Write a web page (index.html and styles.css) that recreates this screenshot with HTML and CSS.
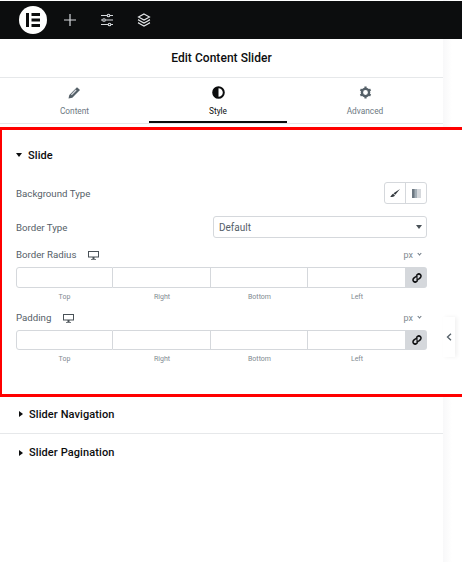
FILE: index.html
```html
<!DOCTYPE html>
<html lang="en">
<head>
    <meta charset="UTF-8">
    <meta name="viewport" content="width=device-width, initial-scale=1.0">
    <title>Edit Content Slider</title>
    <link rel="stylesheet" href="styles.css">
</head>
<body>
  <div class="topbar">
    <div class="logo"><svg width="16" height="14" viewBox="0 0 16 14"><path fill="#0c0d0e" d="M1 0h3v14H1zM6.500 0H15v3H6.500zM6.500 5.500H15v3H6.500zM6.500 11H15v3H6.500z"/></svg></div>
    <svg class="bar-icon" width="14" height="14" viewBox="0 0 14 14"><path stroke="#d5d8dc" stroke-width="1.200" d="M7 1v12M1 7h12"/></svg>
    <svg class="bar-icon" width="14" height="14" viewBox="0 0 14 14" fill="none" stroke="#d5d8dc" stroke-width="1.100"><path d="M1 2.500h6M10 2.500h3M1 7h1.500M5.500 7H13M1 11.500h7M11 11.500h2"/><circle cx="8.500" cy="2.500" r="1.300"/><circle cx="4" cy="7" r="1.300"/><circle cx="9.500" cy="11.500" r="1.300"/></svg>
    <svg class="bar-icon" width="14" height="14" viewBox="0 0 14 14" fill="none" stroke="#e6e8ea" stroke-width="1.100"><path d="M7 1l5.500 3L7 7 1.500 4z"/><path d="M2 6.200L1.500 7 7 10l5.500-3-.5-.8"/><path d="M2 9.200l-.5.800L7 13l5.500-3-.5-.8"/></svg>
  </div>

  <div class="panel">
    <div class="panel-title">Edit Content Slider</div>
    <div class="tabs">
      <div class="tab tab-content">
        <svg width="13" height="13" viewBox="0 0 13 13"><path fill="#556068" d="M.5 12.500l.8-3.600L9 1.200l3 2.900-7.700 7.600z"/><path fill="#d5d8dc" d="M7.600 3.500l1 1-4.800 4.800-.9-.9z"/></svg>
        <span>Content</span>
      </div>
      <div class="tab tab-style tab-active">
        <svg width="13" height="13" viewBox="0 0 13 13"><circle cx="6.500" cy="6.500" r="5.300" fill="none" stroke="#0c0d0e" stroke-width="2"/><path fill="#0c0d0e" d="M6.500 1a5.500 5.500 0 0 0 0 11z"/></svg>
        <span>Style</span>
      </div>
      <div class="tab tab-advanced">
        <svg width="13" height="13" viewBox="0 0 13 13"><circle cx="6.500" cy="6.500" r="3.600" fill="none" stroke="#556068" stroke-width="2.400"/><path stroke="#556068" stroke-width="2.200" d="M6.500 .6v2.200M6.500 10.200v2.200M1.400 3.500l1.900 1.100M9.700 8.400l1.900 1.100M1.400 9.500l1.900-1.100M9.700 4.600l1.900-1.100"/></svg>
        <span>Advanced</span>
      </div>
    </div>
  </div>

  <div class="slide-box">
    <div class="slide-inner">
      <div class="section-head section-open"><i class="caret-down"></i>Slide</div>

      <div class="row row-bg">
        <label>Background Type</label>
        <div class="choices">
          <div class="choice">
            <svg width="10" height="9" viewBox="0 0 10 9"><path fill="#33393e" d="M10 0L5.300 5.800 3.500 4.300zM3 4.800l1.900 1.500C4.500 8 2.300 8.300 0 7.700c1.300-.4 1.600-2.100 3-2.900z"/></svg>
          </div>
          <div class="choice">
            <svg width="9" height="9" viewBox="0 0 9 9"><rect width="9" height="9" fill="#d5d8dc"/><rect width="5" height="9" fill="#a4afb7"/><rect width="2.500" height="9" fill="#6d7882"/></svg>
          </div>
        </div>
      </div>

      <div class="row row-select">
        <label>Border Type</label>
        <div class="select">Default<i class="caret-down caret-select"></i></div>
      </div>

      <div class="dim dim-first">
        <div class="dim-head">
          <label>Border Radius</label>
          <svg class="monitor" width="11" height="10" viewBox="0 0 11 10"><path fill="#495157" d="M0 1h11v6.500H6.500V9H8v.7H3V9h1.500V7.500H0zM1 2v4.500h9V2z"/></svg>
          <span class="unit">px<i class="chev"></i></span>
        </div>
        <div class="dim-inputs">
          <div class="dim-cell"></div><div class="dim-cell"></div><div class="dim-cell"></div><div class="dim-cell"></div>
          <div class="dim-link"><svg width="10" height="10" viewBox="0 0 10 10" fill="none" stroke="#0c0d0e" stroke-width="1.500"><path d="M4.200 2.800l1.200-1.200a1.700 1.700 0 0 1 3 3L7.200 5.800a1.700 1.700 0 0 1-2.700-.3"/><path d="M5.800 7.200L4.600 8.400a1.700 1.700 0 0 1-3-3L2.800 4.200a1.700 1.700 0 0 1 2.700.3"/></svg></div>
        </div>
        <div class="dim-labels"><span>Top</span><span>Right</span><span>Bottom</span><span>Left</span><span></span></div>
      </div>

      <div class="dim dim-second">
        <div class="dim-head">
          <label>Padding</label>
          <svg class="monitor" width="11" height="10" viewBox="0 0 11 10"><path fill="#495157" d="M0 1h11v6.500H6.500V9H8v.7H3V9h1.500V7.500H0zM1 2v4.500h9V2z"/></svg>
          <span class="unit">px<i class="chev"></i></span>
        </div>
        <div class="dim-inputs">
          <div class="dim-cell"></div><div class="dim-cell"></div><div class="dim-cell"></div><div class="dim-cell"></div>
          <div class="dim-link"><svg width="10" height="10" viewBox="0 0 10 10" fill="none" stroke="#0c0d0e" stroke-width="1.500"><path d="M4.200 2.800l1.200-1.200a1.700 1.700 0 0 1 3 3L7.200 5.800a1.700 1.700 0 0 1-2.700-.3"/><path d="M5.800 7.200L4.600 8.400a1.700 1.700 0 0 1-3-3L2.800 4.200a1.700 1.700 0 0 1 2.700.3"/></svg></div>
        </div>
        <div class="dim-labels"><span>Top</span><span>Right</span><span>Bottom</span><span>Left</span><span></span></div>
      </div>
    </div>
  </div>

  <div class="panel">
    <div class="section-head section-closed section-line"><i class="caret-right"></i>Slider Navigation</div>
    <div class="section-head section-closed"><i class="caret-right"></i>Slider Pagination</div>
  </div>

  <div class="collapse">
    <svg width="6" height="8" viewBox="0 0 6 8" fill="none" stroke="#556068" stroke-width="1.300"><path d="M5 .8L1.500 4 5 7.200"/></svg>
  </div>
</body>
</html>
```

FILE: styles.css
```css
* {
  box-sizing: border-box;
}
body {
  margin: 0;
  height: 562px;
  overflow: hidden;
  position: relative;
  font-family: Roboto, sans-serif;
  background: linear-gradient(to right, #fff 443px, #f8f8f9 443px, #fff 452px);
  color: #6d7882;
}
label {
  font-size: 9.700px;
  color: #556068;
}

.topbar {
  margin-top: 1px;
  height: 38px;
  background: #0c0d0e;
  display: flex;
  align-items: center;
  padding-left: 19px;
}
.logo {
  width: 28px;
  height: 28px;
  border-radius: 50%;
  background: #fff;
  display: flex;
  align-items: center;
  justify-content: center;
  margin-right: 16px;
}
.bar-icon {
  margin-right: 23px;
}

.panel {
  width: 443px;
  background: #fff;
}
.panel-title {
  height: 39px;
  line-height: 38px;
  text-align: center;
  font-size: 12px;
  font-weight: 500;
  letter-spacing: 0.05px;
  color: #0c0d0e;
  border-bottom: 1px solid #e6e8ea;
}
.tabs {
  display: flex;
  height: 46px;
  border-bottom: 1px solid #e6e8ea;
}
.tab {
  height: 45px;
  display: flex;
  flex-direction: column;
  align-items: center;
  padding-top: 8px;
  font-size: 8.300px;
  color: #6d7882;
}
.tab span {
  margin-top: 7px;
}
.tab-content {
  width: 149px;
}
.tab-style {
  width: 138px;
}
.tab-advanced {
  width: 156px;
}
.tab-active {
  color: #0c0d0e;
  border-bottom: 2px solid #0c0d0e;
}

.slide-box {
  margin-top: 3px;
  height: 270px;
  border: solid #ff0000;
  border-width: 3px 0 3px 2px;
  background: #fff;
}
.slide-inner {
  width: 441px;
  padding: 0 16px 0 14px;
}
.section-head {
  display: flex;
  align-items: center;
  font-size: 11px;
  font-weight: 500;
  letter-spacing: 0.1px;
  color: #0c0d0e;
}
.section-open {
  height: 50px;
}
.section-closed {
  height: 37px;
  padding-left: 19px;
}
.section-line {
  padding-bottom: 2px;
  border-bottom: 1px solid #e6e8ea;
}
.caret-down {
  width: 0;
  height: 0;
  border-left: 3.500px solid transparent;
  border-right: 3.500px solid transparent;
  border-top: 4px solid #0c0d0e;
  margin-right: 6px;
}
.caret-right {
  width: 0;
  height: 0;
  border-top: 3.500px solid transparent;
  border-bottom: 3.500px solid transparent;
  border-left: 4px solid #0c0d0e;
  margin-right: 6px;
}

.row {
  display: flex;
  align-items: center;
  justify-content: space-between;
}
.row-bg {
  height: 22px;
  margin-top: 2px;
}
.row-select {
  height: 22px;
  margin-top: 12px;
}
.choices {
  display: flex;
  width: 43px;
  height: 22px;
  border: 1px solid #d5d8dc;
  border-radius: 3px;
}
.choice {
  flex: 1;
  display: flex;
  align-items: center;
  justify-content: center;
}
.choice + .choice {
  border-left: 1px solid #d5d8dc;
}
.select {
  width: 214px;
  height: 22px;
  border: 1px solid #d5d8dc;
  border-radius: 3px;
  display: flex;
  align-items: center;
  justify-content: space-between;
  padding: 0 4px 0 5px;
  font-size: 10px;
  color: #556068;
}
.caret-select {
  margin-right: 0;
  border-top-color: #495157;
}

.dim {
  margin-top: 8px;
}
.dim-first {
  margin-top: 9px;
}
.dim-head {
  display: flex;
  align-items: center;
  height: 15px;
}
.monitor {
  margin-left: 12px;
}
.unit {
  margin-left: auto;
  margin-right: 5px;
  font-size: 9px;
  color: #818a91;
  display: flex;
  align-items: center;
}
.chev {
  width: 3px;
  height: 3px;
  border-right: 1px solid #6d7882;
  border-bottom: 1px solid #6d7882;
  transform: rotate(45deg);
  margin: -2px 1px 0 5px;
}
.dim-inputs {
  display: grid;
  grid-template-columns: 97px 98px 97px 98px 21px;
  height: 21px;
  margin-top: 5px;
}
.dim-second .dim-inputs {
  height: 20px;
}
.dim-cell {
  border: 1px solid #d5d8dc;
  border-left: 0;
}
.dim-cell:first-child {
  border-left: 1px solid #d5d8dc;
  border-radius: 3px 0 0 3px;
}
.dim-link {
  background: #d5d8dc;
  border-radius: 0 3px 3px 0;
  display: flex;
  align-items: center;
  justify-content: center;
}
.dim-labels {
  display: grid;
  grid-template-columns: 97px 98px 97px 98px 21px;
  margin-top: 4px;
  font-size: 7px;
  line-height: 10px;
  color: #818a91;
  text-align: center;
}

.collapse {
  position: absolute;
  left: 443px;
  top: 317px;
  width: 12px;
  height: 40px;
  background: #fff;
  box-shadow: 2px 0 4px rgba(0, 0, 0, 0.06);
  display: flex;
  align-items: center;
  justify-content: center;
}
```
